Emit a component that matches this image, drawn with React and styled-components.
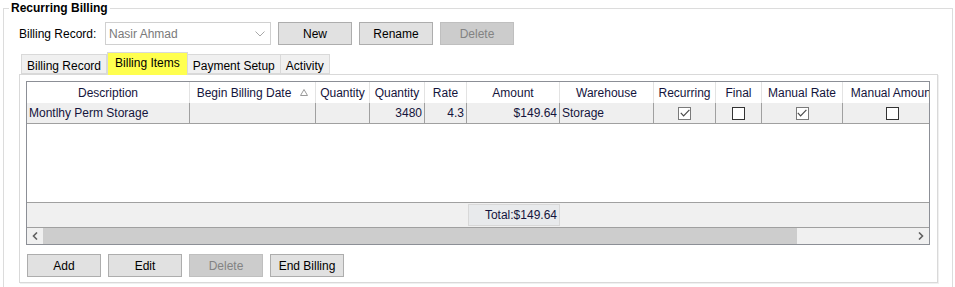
import styled, { createGlobalStyle } from "styled-components";

const GlobalStyle = createGlobalStyle`
  body {
    margin: 0;
    background: #ffffff;
    font-family: "Liberation Sans", Arial, sans-serif;
    font-size: 12px;
    color: #000;
  }
`;

const COLUMNS = "163px 126px 54px 55px 42px 93px 94px 62px 46px 81px 100px";

const headers = [
  "Description",
  "Begin Billing Date",
  "Quantity",
  "Quantity",
  "Rate",
  "Amount",
  "Warehouse",
  "Recurring",
  "Final",
  "Manual Rate",
  "Manual Amount",
];

const Group = styled.fieldset`
  margin: 1px 2px 0 3px;
  padding: 0 14px 10px 15px;
  border: 1px solid #dcdcdc;
  min-width: 0;
`;

const Legend = styled.legend`
  margin-left: -10px;
  padding: 0 2px;
  font-weight: bold;
  font-size: 12px;
  line-height: 14px;
`;

const Toolbar = styled.div`
  display: flex;
  align-items: center;
  gap: 7px;
  margin-top: 7px;
  height: 23px;
`;

const Label = styled.span`
  width: 79px;
  white-space: nowrap;
`;

const Combo = styled.div`
  box-sizing: border-box;
  width: 166px;
  height: 23px;
  border: 1px solid #d0d0d0;
  background: #fff;
  display: flex;
  align-items: center;
  justify-content: space-between;
  padding: 0 5px 0 3px;
  color: #7a7a7a;
`;

const Button = styled.button`
  box-sizing: border-box;
  width: 74px;
  height: 23px;
  margin: 0;
  padding: 0;
  font-family: inherit;
  font-size: 12px;
  border: 1px solid ${(p) => (p.disabled ? "#bfbfbf" : "#adadad")};
  background: ${(p) => (p.disabled ? "#cccccc" : "#e1e1e1")};
  color: ${(p) => (p.disabled ? "#838383" : "#000")};
`;

const TabStrip = styled.div`
  display: flex;
  align-items: flex-end;
  margin-top: 7px;
  padding-left: 2px;
  height: 22px;
`;

const Tab = styled.div`
  box-sizing: border-box;
  position: relative;
  z-index: ${(p) => (p.$active ? 1 : 0)};
  height: ${(p) => (p.$active ? "23px" : "20px")};
  margin-bottom: ${(p) => (p.$active ? "-1px" : "0")};
  padding: ${(p) => (p.$active ? "3px 7px 0" : "4px 5px 0")};
  border: 1px solid #d9d9d9;
  border-bottom: ${(p) => (p.$active ? "none" : "1px solid #d9d9d9")};
  border-left: ${(p) => (p.$first || p.$active ? "1px solid #d9d9d9" : "none")};
  background: ${(p) => (p.$active ? "#ffff4f" : "#f0f0f0")};
  white-space: nowrap;
`;

const Panel = styled.div`
  border: 1px solid #d9d9d9;
  box-shadow: 1px 1px 0 #f0f0f0;
  background: #fff;
  padding: 6px 7px 5px 6px;
`;

const Grid = styled.div`
  box-sizing: border-box;
  height: 164px;
  border: 1px solid #8c8f96;
  display: flex;
  flex-direction: column;
  overflow: hidden;
  color: #14143c;
`;

const Columns = styled.div`
  display: grid;
  grid-template-columns: ${COLUMNS};
  flex: none;
`;

const HeaderRow = styled(Columns)`
  height: 21px;
  background: #fff;
`;

const HeaderCell = styled.div`
  display: flex;
  align-items: center;
  justify-content: center;
  gap: 9px;
  border-right: 1px solid #e3e3e3;
  white-space: nowrap;
  overflow: hidden;
`;

const DataRow = styled(Columns)`
  height: 21px;
  background: #efefef;
  border-bottom: 1px solid #a0a0a0;
  box-sizing: border-box;
`;

const Cell = styled.div`
  box-sizing: border-box;
  display: flex;
  align-items: center;
  justify-content: ${(p) =>
    p.$align === "right" ? "flex-end" : p.$align === "center" ? "center" : "flex-start"};
  padding: 0 2px;
  border-right: 1px solid #a0a0a0;
  white-space: nowrap;
  overflow: hidden;
`;

const Empty = styled.div`
  flex: 1;
  background: #fff;
`;

const FooterRow = styled(Columns)`
  height: 25px;
  box-sizing: border-box;
  border-top: 1px solid #a0a0a0;
  background: #f0f0f0;
  align-items: center;
`;

const TotalCell = styled.div`
  grid-column: 6;
  height: 22px;
  box-sizing: border-box;
  margin-left: 1px;
  border: 1px solid #d8d8d8;
  background: #e8eaec;
  display: flex;
  align-items: center;
  justify-content: flex-end;
  padding-right: 2px;
`;

const ScrollBar = styled.div`
  flex: none;
  height: 17px;
  box-sizing: border-box;
  border-top: 1px solid #a0a0a0;
  background: #f0f0f0;
  display: flex;
`;

const ScrollArrow = styled.div`
  width: 16px;
  display: flex;
  align-items: center;
  justify-content: center;
`;

const Track = styled.div`
  flex: 1;
  display: flex;
`;

const Thumb = styled.div`
  background: #cdcdcd;
  height: 100%;
`;

const Actions = styled.div`
  display: flex;
  gap: 7px;
  margin-top: 9px;
  padding-left: 1px;
`;

const Box = styled.span`
  box-sizing: border-box;
  width: 13px;
  height: 13px;
  border: 1px solid ${(p) => (p.$checked ? "#7a7a7a" : "#333333")};
  background: #fff;
  display: flex;
  align-items: center;
  justify-content: center;
`;

function Check({ checked }) {
  return (
    <Box $checked={checked}>
      {checked && (
        <svg width="10" height="8" viewBox="0 0 10 8">
          <polyline points="0.8,3.8 3.6,6.8 9.4,0.8" fill="none" stroke="#4a4a4a" strokeWidth="1.2" />
        </svg>
      )}
    </Box>
  );
}

function Chevron({ dir }) {
  return (
    <svg width="6" height="8" viewBox="0 0 6 8">
      <polyline
        points={dir === "left" ? "5,0.5 1.5,4 5,7.5" : "1,0.5 4.5,4 1,7.5"}
        fill="none"
        stroke="#606060"
        strokeWidth="1.6"
      />
    </svg>
  );
}

export default function App() {
  return (
    <>
      <GlobalStyle />
      <Group>
        <Legend>Recurring Billing</Legend>
        <Toolbar>
          <Label>Billing Record:</Label>
          <Combo>
            <span>Nasir Ahmad</span>
            <svg width="10" height="6" viewBox="0 0 10 6">
              <polyline points="0.5,0.5 5,5 9.5,0.5" fill="none" stroke="#a8a8a8" strokeWidth="1" />
            </svg>
          </Combo>
          <Button>New</Button>
          <Button>Rename</Button>
          <Button disabled>Delete</Button>
        </Toolbar>

        <TabStrip>
          <Tab $first>Billing Record</Tab>
          <Tab $active>Billing Items</Tab>
          <Tab>Payment Setup</Tab>
          <Tab>Activity</Tab>
        </TabStrip>

        <Panel>
          <Grid>
            <HeaderRow>
              {headers.map((h, i) => (
                <HeaderCell key={i}>
                  {h}
                  {i === 1 && (
                    <svg width="8" height="7" viewBox="0 0 8 7">
                      <polygon points="4,0.5 7.5,6.5 0.5,6.5" fill="none" stroke="#9a9a9a" strokeWidth="1" />
                    </svg>
                  )}
                </HeaderCell>
              ))}
            </HeaderRow>
            <DataRow>
              <Cell>Montlhy Perm Storage</Cell>
              <Cell />
              <Cell />
              <Cell $align="right">3480</Cell>
              <Cell $align="right">4.3</Cell>
              <Cell $align="right">$149.64</Cell>
              <Cell>Storage</Cell>
              <Cell $align="center"><Check checked /></Cell>
              <Cell $align="center"><Check /></Cell>
              <Cell $align="center"><Check checked /></Cell>
              <Cell $align="center"><Check /></Cell>
            </DataRow>
            <Empty />
            <FooterRow>
              <TotalCell>Total:$149.64</TotalCell>
            </FooterRow>
            <ScrollBar>
              <ScrollArrow><Chevron dir="left" /></ScrollArrow>
              <Track>
                <Thumb style={{ width: `${(754 / 870) * 100}%` }} />
              </Track>
              <ScrollArrow><Chevron dir="right" /></ScrollArrow>
            </ScrollBar>
          </Grid>
          <Actions>
            <Button>Add</Button>
            <Button>Edit</Button>
            <Button disabled>Delete</Button>
            <Button>End Billing</Button>
          </Actions>
        </Panel>
      </Group>
    </>
  );
}
